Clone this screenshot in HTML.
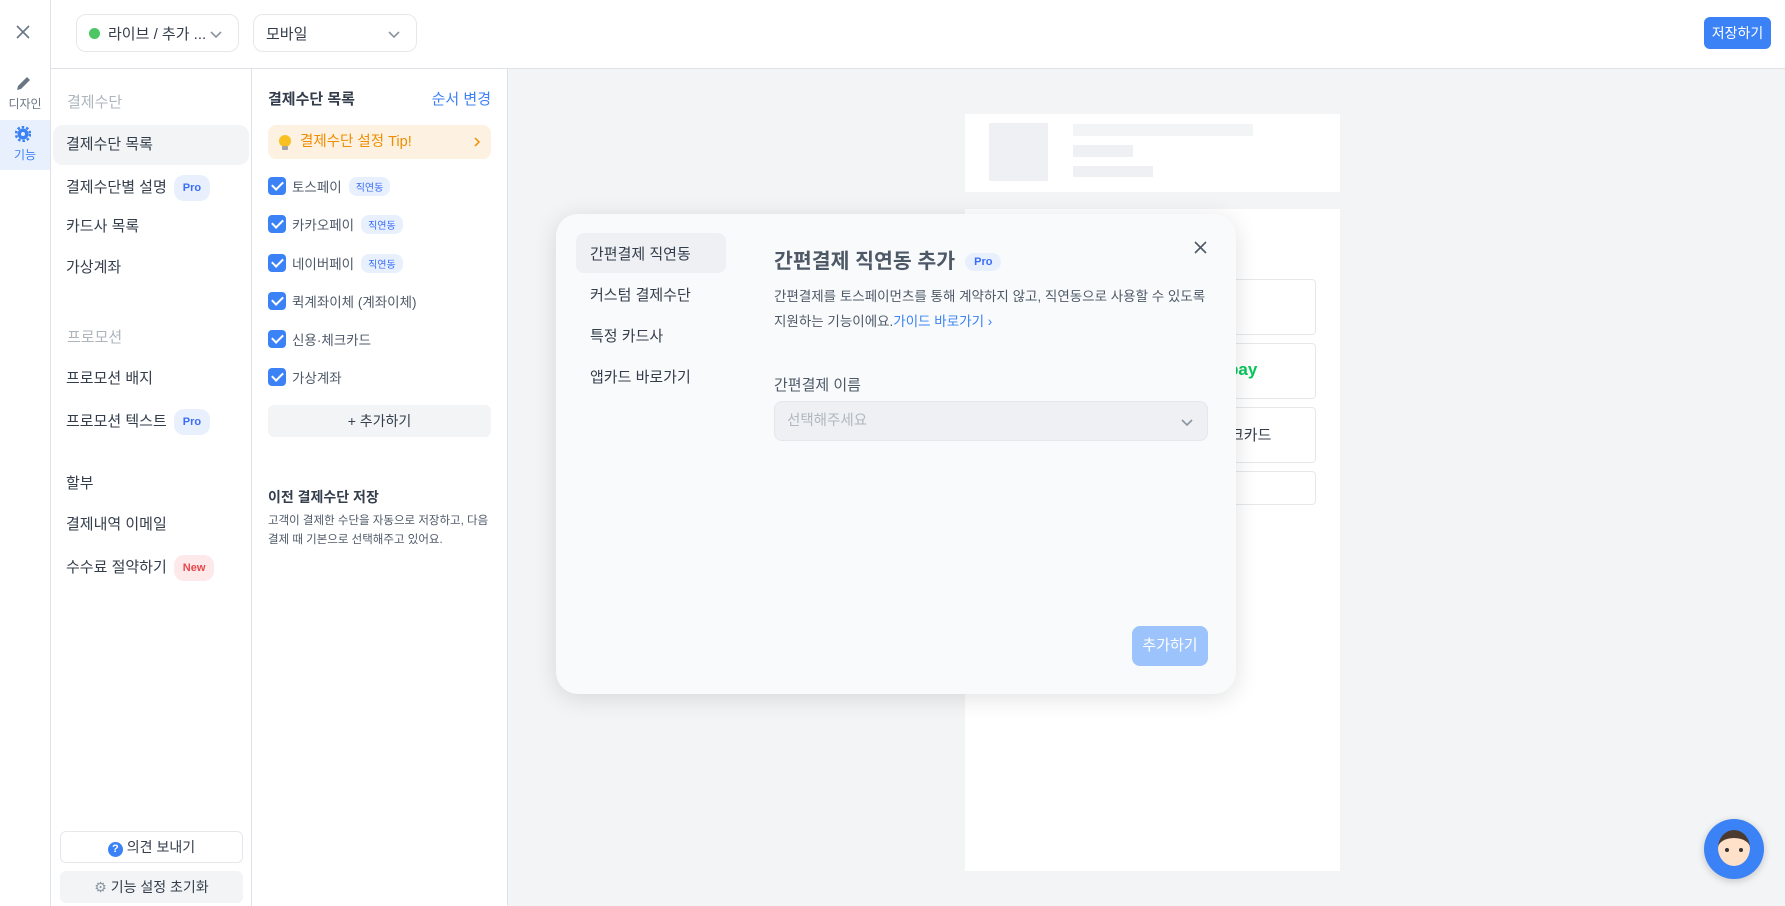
<!DOCTYPE html><html><head><meta charset="utf-8"><style>
*{box-sizing:border-box;margin:0;padding:0}
body{width:1785px;height:906px;overflow:hidden;background:#fff;font-family:"Liberation Sans","Noto Sans CJK KR",sans-serif;color:#333d4b;position:relative}
.a{position:absolute}
.dd{position:absolute;top:14px;height:38px;border:1px solid #e5e8eb;border-radius:10px;font-size:15px;display:flex;align-items:center;padding-left:12px;color:#333d4b}
.chev{position:absolute;right:14px;top:11px}
.mi{position:absolute;left:66px;font-size:15px;color:#333d4b;line-height:20px}
.pro{display:inline-block;background:#e8f0fe;color:#3b6ef5;font-size:11px;font-weight:bold;border-radius:10px;padding:3px 9px;margin-left:7px;vertical-align:1px}
.cb{position:absolute;left:268px;width:18px;height:18px;background:#3b82f6;border-radius:4px}
.cb:after{content:"";position:absolute;left:4px;top:4px;width:9px;height:5px;border-left:2px solid #fff;border-bottom:2px solid #fff;transform:rotate(-45deg)}
.cl{position:absolute;left:292px;font-size:13.5px;color:#4e5968}
.tag{display:inline-block;background:#e8f0fe;color:#3b6ef5;font-size:10px;border-radius:8px;padding:2px 7px;margin-left:7px;vertical-align:1px}
</style></head><body>
<div class="a" style="left:0;top:0;width:51px;height:906px;border-right:1px solid #dfe2e6"></div>
<div class="a" style="left:51px;top:68px;width:1734px;height:1px;background:#dfe2e6"></div>
<svg class="a" style="left:16px;top:25px" width="14" height="14" viewBox="0 0 14 14"><path d="M1 1L13 13M13 1L1 13" stroke="#6b7684" stroke-width="1.6"/></svg>
<svg class="a" style="left:15px;top:74px" width="18" height="18" viewBox="0 0 18 18"><path d="M2 16l1-4 9-9 3 3-9 9z" fill="#6b7684"/></svg>
<div class="a" style="left:0;top:95px;width:50px;text-align:center;font-size:12px;color:#6b7684">디자인</div>
<div class="a" style="left:0;top:120px;width:50px;height:50px;background:#e8f0fe"></div>
<svg class="a" style="left:15px;top:126px" width="16" height="16" viewBox="0 0 16 16"><circle cx="8" cy="8" r="5.5" fill="#3b82f6"/><circle cx="8" cy="8" r="7" fill="none" stroke="#3b82f6" stroke-width="2.5" stroke-dasharray="2.5 2"/><circle cx="8" cy="8" r="2" fill="#e8f0fe"/></svg>
<div class="a" style="left:0;top:146px;width:50px;text-align:center;font-size:12px;color:#3b82f6">기능</div>
<div class="dd" style="left:76px;width:163px"><span style="width:11px;height:11px;border-radius:50%;background:#4cc764;display:inline-block;margin-right:8px"></span>라이브 / 추가 ...<svg class="chev" width="16" height="16" viewBox="0 0 16 16"><path d="M3 6l5 5 5-5" stroke="#8b95a1" stroke-width="1.6" fill="none"/></svg></div>
<div class="dd" style="left:253px;width:164px">모바일<svg class="chev" width="16" height="16" viewBox="0 0 16 16"><path d="M3 6l5 5 5-5" stroke="#8b95a1" stroke-width="1.6" fill="none"/></svg></div>
<div class="a" style="left:1704px;top:17px;width:67px;height:32px;background:#3b82f6;border-radius:6px;color:#fff;font-size:14px;text-align:center;line-height:32px">저장하기</div>
<div class="a" style="left:251px;top:69px;width:1px;height:837px;background:#dfe2e6"></div>
<div class="a" style="left:67px;top:91px;font-size:15px;color:#adb5bd">결제수단</div>
<div class="a" style="left:53px;top:125px;width:196px;height:40px;background:#f2f4f6;border-radius:10px"></div>
<div class="mi" style="top:135px">결제수단 목록</div>
<div class="mi" style="top:175px">결제수단별 설명<span class="pro">Pro</span></div>
<div class="mi" style="top:217px">카드사 목록</div>
<div class="mi" style="top:258px">가상계좌</div>
<div class="a" style="left:67px;top:326px;font-size:15px;color:#adb5bd">프로모션</div>
<div class="mi" style="top:369px">프로모션 배지</div>
<div class="mi" style="top:409px">프로모션 텍스트<span class="pro">Pro</span></div>
<div class="mi" style="top:474px">할부</div>
<div class="mi" style="top:515px">결제내역 이메일</div>
<div class="mi" style="top:555px">수수료 절약하기<span class="pro" style="background:#fde8ea;color:#e5484d">New</span></div>
<div class="a" style="left:60px;top:831px;width:183px;height:32px;border:1px solid #e5e8eb;border-radius:6px;font-size:14px;text-align:center;line-height:30px"><span style="display:inline-block;width:15px;height:15px;border-radius:50%;background:#3b82f6;color:#fff;font-size:11px;line-height:15px;font-weight:bold;vertical-align:0">?</span> 의견 보내기</div>
<div class="a" style="left:60px;top:871px;width:183px;height:32px;background:#f2f4f6;border-radius:6px;font-size:14px;text-align:center;line-height:32px"><span style="color:#8b95a1">⚙</span> 기능 설정 초기화</div>
<div class="a" style="left:507px;top:69px;width:1px;height:837px;background:#dfe2e6"></div>
<div class="a" style="left:268px;top:88px;font-size:15px;font-weight:bold;color:#333d4b">결제수단 목록</div>
<div class="a" style="left:420px;top:88px;width:71px;text-align:right;font-size:15px;color:#3b82f6">순서 변경</div>
<div class="a" style="left:268px;top:125px;width:223px;height:34px;background:#fdf2e1;border-radius:8px;color:#f08c00;font-size:14.5px;line-height:34px;padding-left:32px">결제수단 설정 Tip!<span style="position:absolute;left:11px;top:10px;width:12px;height:12px;border-radius:50%;background:#f8c021"></span><span style="position:absolute;left:14px;top:21px;width:6px;height:4px;background:#a0a4aa;border-radius:1px"></span><svg style="position:absolute;right:10px;top:12px" width="8" height="10" viewBox="0 0 8 10"><path d="M2 1l4 4-4 4" stroke="#f08c00" stroke-width="1.5" fill="none"/></svg></div>
<div class="cb" style="top:177px"></div><div class="cl" style="top:176px">토스페이<span class="tag">직연동</span></div>
<div class="cb" style="top:215px"></div><div class="cl" style="top:214px">카카오페이<span class="tag">직연동</span></div>
<div class="cb" style="top:254px"></div><div class="cl" style="top:253px">네이버페이<span class="tag">직연동</span></div>
<div class="cb" style="top:292px"></div><div class="cl" style="top:291px">퀵계좌이체 (계좌이체)</div>
<div class="cb" style="top:330px"></div><div class="cl" style="top:329px">신용·체크카드</div>
<div class="cb" style="top:368px"></div><div class="cl" style="top:367px">가상계좌</div>
<div class="a" style="left:268px;top:405px;width:223px;height:32px;background:#f2f4f6;border-radius:6px;font-size:14px;text-align:center;line-height:32px">+ 추가하기</div>
<div class="a" style="left:268px;top:487px;font-size:14px;font-weight:bold">이전 결제수단 저장</div>
<div class="a" style="left:268px;top:512px;font-size:11.5px;color:#4e5968;line-height:19px">고객이 결제한 수단을 자동으로 저장하고, 다음<br>결제 때 기본으로 선택해주고 있어요.</div>
<div class="a" style="left:508px;top:69px;width:1277px;height:837px;background:#f3f4f6"></div>
<div class="a" style="left:965px;top:114px;width:375px;height:78px;background:#fff"></div>
<div class="a" style="left:989px;top:123px;width:59px;height:58px;background:#eef0f3"></div>
<div class="a" style="left:1073px;top:124px;width:180px;height:12px;background:#f2f4f6"></div>
<div class="a" style="left:1073px;top:145px;width:60px;height:12px;background:#eef0f3"></div>
<div class="a" style="left:1073px;top:166px;width:80px;height:11px;background:#eef0f3"></div>
<div class="a" style="left:965px;top:209px;width:375px;height:662px;background:#fff"></div>
<div class="a" style="left:988px;top:279px;width:328px;height:56px;border:1px solid #e5e8eb;border-radius:4px"></div>
<div class="a" style="left:988px;top:343px;width:328px;height:56px;border:1px solid #e5e8eb;border-radius:4px"></div>
<div class="a" style="left:1228px;top:360px;color:#03c75a;font-size:17px;font-weight:bold">pay</div>
<div class="a" style="left:988px;top:407px;width:328px;height:56px;border:1px solid #e5e8eb;border-radius:4px"></div>
<div class="a" style="left:1230px;top:424px;font-size:15px">크카드</div>
<div class="a" style="left:988px;top:471px;width:328px;height:34px;border:1px solid #e5e8eb;border-radius:4px"></div>
<div class="a" style="left:556px;top:214px;width:680px;height:480px;background:#f9fafb;border-radius:22px;box-shadow:0 4px 24px rgba(0,0,0,.12)"></div>
<div class="a" style="left:576px;top:233px;width:150px;height:40px;background:#eef0f3;border-radius:8px"></div>
<div class="a" style="left:590px;top:243px;font-size:15px">간편결제 직연동</div>
<div class="a" style="left:590px;top:284px;font-size:15px">커스텀 결제수단</div>
<div class="a" style="left:590px;top:325px;font-size:15px">특정 카드사</div>
<div class="a" style="left:590px;top:366px;font-size:15px">앱카드 바로가기</div>
<div class="a" style="left:774px;top:244px;font-size:20.5px;font-weight:bold;color:#4e5968">간편결제 직연동 추가<span class="pro" style="font-size:11px;margin-left:10px;vertical-align:3px">Pro</span></div>
<svg class="a" style="left:1194px;top:241px" width="13" height="13" viewBox="0 0 13 13"><path d="M1 1L12 12M12 1L1 12" stroke="#4e5968" stroke-width="1.6"/></svg>
<div class="a" style="left:774px;top:284px;font-size:13.5px;line-height:25px;color:#4e5968">간편결제를 토스페이먼츠를 통해 계약하지 않고, 직연동으로 사용할 수 있도록<br>지원하는 기능이에요.<span style="color:#3b82f6">가이드 바로가기 ›</span></div>
<div class="a" style="left:774px;top:374px;font-size:15px;color:#4e5968">간편결제 이름</div>
<div class="a" style="left:774px;top:401px;width:434px;height:40px;background:#eef0f3;border:1px solid #e5e8eb;border-radius:8px;font-size:14.5px;color:#b0b8c1;line-height:38px;padding-left:12px">선택해주세요<svg style="position:absolute;right:12px;top:12px" width="16" height="16" viewBox="0 0 16 16"><path d="M3 6l5 5 5-5" stroke="#8b95a1" stroke-width="1.6" fill="none"/></svg></div>
<div class="a" style="left:1132px;top:626px;width:76px;height:40px;background:#9cc3fb;border-radius:8px;color:#fff;font-size:15px;text-align:center;line-height:40px">추가하기</div>
<div class="a" style="left:1704px;top:819px;width:60px;height:60px;border-radius:50%;background:#3b82f6;box-shadow:0 2px 8px rgba(0,0,0,.2)"></div>
<div class="a" style="left:1718px;top:830px;width:32px;height:36px;border-radius:50%;background:#ffe0c8;border-top:8px solid #4b3a30"></div>
<div class="a" style="left:1725px;top:848px;width:4px;height:4px;border-radius:50%;background:#333"></div>
<div class="a" style="left:1739px;top:848px;width:4px;height:4px;border-radius:50%;background:#333"></div>
</body></html>
